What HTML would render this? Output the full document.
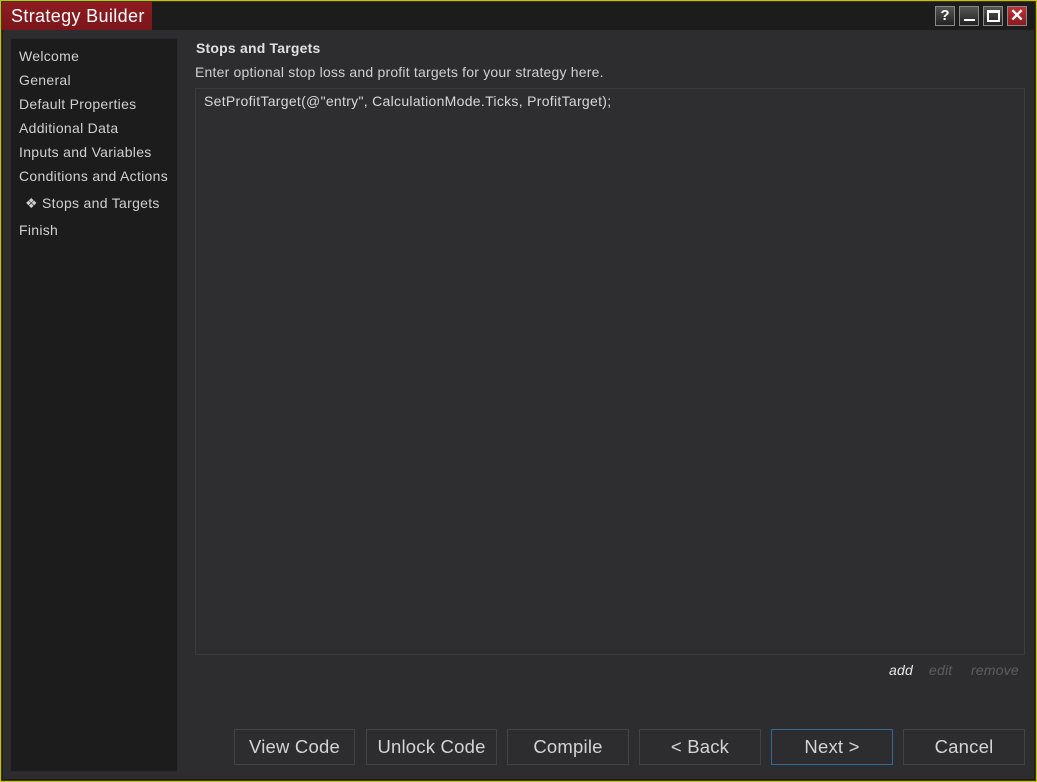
<!DOCTYPE html>
<html><head><style>
*{margin:0;padding:0;box-sizing:border-box}
body{width:1037px;height:782px;background:#c8c000;font-family:"Liberation Sans",sans-serif;position:relative;overflow:hidden}
.win{position:absolute;left:1px;top:1px;width:1035px;height:780px;background:#1c1c1c;border:1px solid #3a3a1a}
.title{position:absolute;left:2px;top:2px;width:150px;height:28px;background:linear-gradient(#8e1c22,#7a151a);color:#fff;font-size:18px;line-height:28px;padding-left:9px;letter-spacing:0.35px}
.body{position:absolute;left:3px;top:30px;width:1031px;height:749px;background:#2d2d2f}
.nav{position:absolute;left:10px;top:38px;width:168px;height:734px;background:#1c1c1c;border:1px solid #2a2a2a}
.nav div{position:absolute;left:8px;color:#d0d0d0;font-size:14px;letter-spacing:0.3px}
.abs{position:absolute;letter-spacing:0.2px}
.btn{position:absolute;top:729px;height:36px;border:1px solid #444;color:#d4d4d4;font-size:18.5px;text-align:center;line-height:34px;background:#2d2d2f;letter-spacing:0.2px}
.tb{position:absolute;top:6px;width:20px;height:20px;border:1px solid #888;background:linear-gradient(#555,#222);color:#fff;font-weight:bold;text-align:center;font-size:15px;line-height:18px}
</style></head><body>
<div class="win"></div>
<div class="body"></div>
<div class="title">Strategy Builder</div>
<div class="tb" style="left:935px">?</div>
<div class="tb" style="left:959px"><div style="position:absolute;left:4px;top:12px;width:11px;height:2px;background:#fff"></div></div>
<div class="tb" style="left:983px"><div style="position:absolute;left:3px;top:3px;width:13px;height:12px;border:2px solid #fff;border-top-width:3px"></div></div>
<div class="tb" style="left:1007px;background:linear-gradient(#c03038,#8a1a20);font-size:17px">✕</div>
<div class="nav">
<div style="top:9px">Welcome</div>
<div style="top:33px">General</div>
<div style="top:57px">Default Properties</div>
<div style="top:81px">Additional Data</div>
<div style="top:105px">Inputs and Variables</div>
<div style="top:129px">Conditions and Actions</div>
<div style="top:156px;left:14px">❖ Stops and Targets</div>
<div style="top:183px">Finish</div>
</div>
<div class="abs" style="left:196px;top:40px;color:#e0e0e0;font-size:14px;font-weight:bold">Stops and Targets</div>
<div class="abs" style="left:195px;top:64px;color:#d0d0d0;font-size:14px">Enter optional stop loss and profit targets for your strategy here.</div>
<div class="abs" style="left:195px;top:88px;width:830px;height:567px;background:#2e2e30;border:1px solid #3c3c3e"></div>
<div class="abs" style="left:204px;top:93px;color:#d8d8d8;font-size:14px;letter-spacing:0.3px">SetProfitTarget(@"entry", CalculationMode.Ticks, ProfitTarget);</div>
<div class="abs" style="left:889px;top:662px;color:#e8e8e8;font-size:14px;font-style:italic">add</div>
<div class="abs" style="left:929px;top:662px;color:#5e5e5e;font-size:14px;font-style:italic">edit</div>
<div class="abs" style="left:971px;top:662px;color:#5e5e5e;font-size:14px;font-style:italic">remove</div>
<div class="btn" style="left:234px;width:121px">View Code</div>
<div class="btn" style="left:366px;width:131px">Unlock Code</div>
<div class="btn" style="left:507px;width:122px">Compile</div>
<div class="btn" style="left:639px;width:122px">&lt; Back</div>
<div class="btn" style="left:771px;width:122px;border-color:#2f6a9a">Next &gt;</div>
<div class="btn" style="left:903px;width:122px">Cancel</div>
</body></html>
